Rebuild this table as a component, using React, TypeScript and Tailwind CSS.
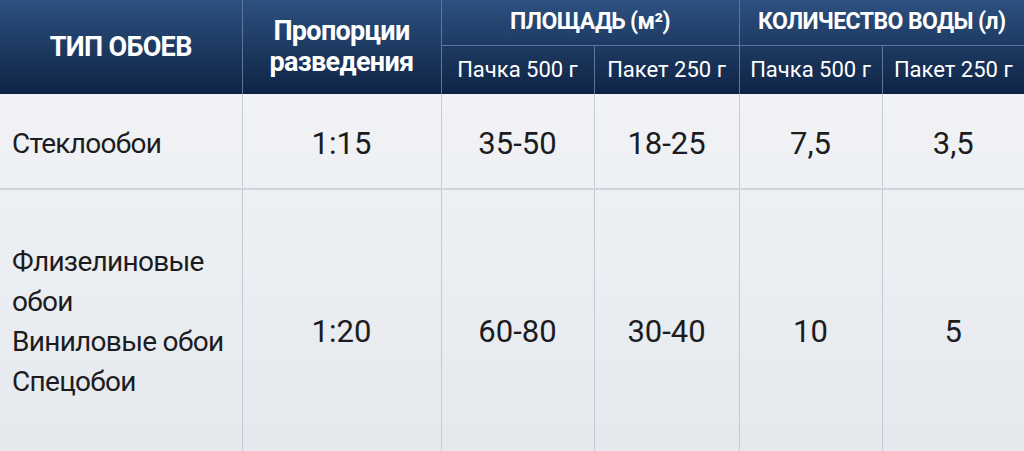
import React from 'react'

const font = { fontFamily: 'Roboto, "Noto Sans", sans-serif' }

const rows = [
    { type: ['Стеклообои'], ratio: '1:15', area500: '35-50', area250: '18-25', water500: '7,5', water250: '3,5' },
    {
        type: ['Флизелиновые', 'обои', 'Виниловые обои', 'Спецобои'],
        ratio: '1:20', area500: '60-80', area250: '30-40', water500: '10', water250: '5',
    },
]

export default function App() {
    return (
        <div className="w-[1024px] h-[451px] overflow-hidden bg-gradient-to-b from-[#f4f5f7] to-[#e5e9ee]" style={font}>
            <table className="w-full border-collapse table-fixed">
                <colgroup>
                    <col className="w-[242px]" />
                    <col className="w-[199px]" />
                    <col className="w-[153px]" />
                    <col className="w-[145px]" />
                    <col className="w-[143px]" />
                    <col className="w-[142px]" />
                </colgroup>
                <thead className="bg-gradient-to-b from-[#2d5180] to-[#0f2445] text-white">
                    <tr className="h-[45px]">
                        <th rowSpan={2} className="border-r border-[#5d7699] text-[27px] font-bold tracking-tight">ТИП ОБОЕВ</th>
                        <th rowSpan={2} className="border-r border-[#5d7699] text-[27px] font-bold leading-[31px] tracking-tight">Пропорции<br />разведения</th>
                        <th colSpan={2} className="border-r border-b border-[#5d7699] text-[23px] font-bold tracking-tight">ПЛОЩАДЬ (м²)</th>
                        <th colSpan={2} className="border-b border-[#5d7699] text-[23px] font-bold tracking-tight">КОЛИЧЕСТВО ВОДЫ (л)</th>
                    </tr>
                    <tr className="h-[49px] text-[22px]">
                        <th className="border-r border-[#5d7699] font-normal">Пачка 500 г</th>
                        <th className="border-r border-[#5d7699] font-normal">Пакет 250 г</th>
                        <th className="border-r border-[#5d7699] font-normal">Пачка 500 г</th>
                        <th className="font-normal">Пакет 250 г</th>
                    </tr>
                </thead>
                <tbody className="text-[#1c1c1e] text-[31px]">
                    {rows.map((r, i) => {
                        const num = i === 0 ? 'text-center border-r border-[#c3cbd6] pt-[6px]' : 'text-center border-r border-[#c3cbd6] pt-[24px]'
                        return (
                            <tr key={i} className={i === 0 ? 'h-[95px] border-b-2 border-[#cfd5dd]' : 'h-[262px]'}>
                                <td className={i === 0 ? 'pl-3 pt-[6px] border-r border-[#c3cbd6] leading-[40px] text-[28px] tracking-tight whitespace-nowrap' : 'pl-3 pt-[2px] border-r border-[#c3cbd6] leading-[40px] text-[28px] tracking-tight whitespace-nowrap'}>
                                    {r.type.map((t) => (
                                        <div key={t}>{t}</div>
                                    ))}
                                </td>
                                <td className={num}>{r.ratio}</td>
                                <td className={num}>{r.area500}</td>
                                <td className={num}>{r.area250}</td>
                                <td className={num}>{r.water500}</td>
                                <td className={i === 0 ? 'text-center pt-[6px]' : 'text-center pt-[24px]'}>{r.water250}</td>
                            </tr>
                        )
                    })}
                </tbody>
            </table>
        </div>
    )
}
